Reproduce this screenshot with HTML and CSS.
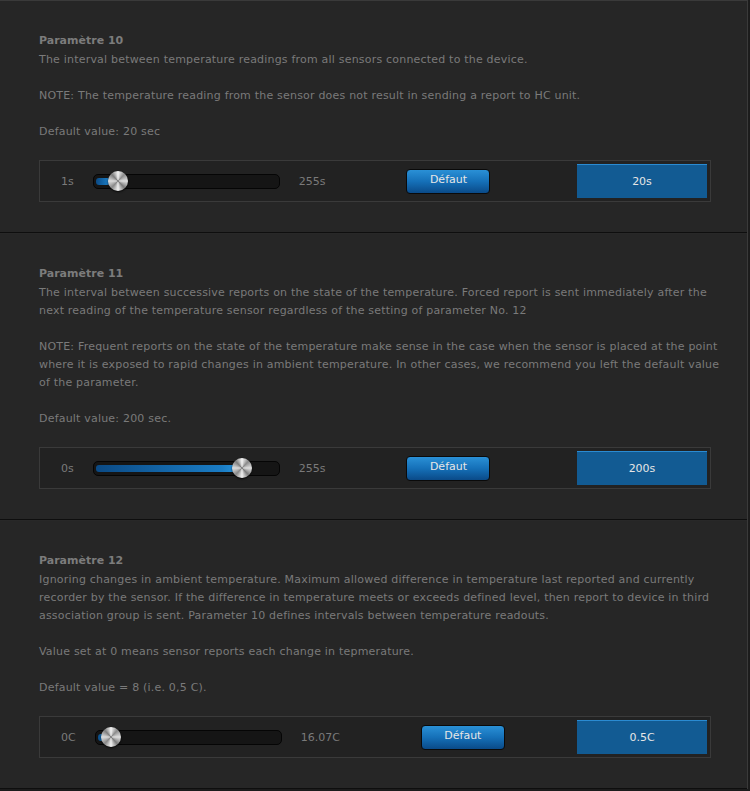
FILE: index.html
```html
<!DOCTYPE html>
<html lang="fr">
<head>
    <meta charset="UTF-8">
    <title>Paramètres</title>
    <link rel="stylesheet" href="styles.css">
</head>
<body>
    <div class="params">
        <section class="param">
            <h3>Paramètre 10</h3>
            <p>The interval between temperature readings from all sensors connected to the device.</p>
            <p>NOTE: The temperature reading from the sensor does not result in sending a report to HC unit.</p>
            <p>Default value: 20 sec</p>
            <div class="control">
                <span class="min">1s</span>
                <div class="slider">
                    <div class="fill" style="width: 14px"></div>
                    <div class="thumb" style="left: 14px"></div>
                </div>
                <span class="max">255s</span>
                <button class="btn-default">Défaut</button>
                <div class="value">20s</div>
            </div>
        </section>

        <section class="param">
            <h3>Paramètre 11</h3>
            <p>The interval between successive reports on the state of the temperature. Forced report is sent immediately after the next reading of the temperature sensor regardless of the setting of parameter No. 12</p>
            <p>NOTE: Frequent reports on the state of the temperature make sense in the case when the sensor is placed at the point where it is exposed to rapid changes in ambient temperature. In other cases, we recommend you left the default value of the parameter.</p>
            <p>Default value: 200 sec.</p>
            <div class="control">
                <span class="min">0s</span>
                <div class="slider">
                    <div class="fill" style="width: 140px"></div>
                    <div class="thumb" style="left: 138px"></div>
                </div>
                <span class="max">255s</span>
                <button class="btn-default">Défaut</button>
                <div class="value">200s</div>
            </div>
        </section>

        <section class="param">
            <h3>Paramètre 12</h3>
            <p>Ignoring changes in ambient temperature. Maximum allowed difference in temperature last reported and currently recorder by the sensor. If the difference in temperature meets or exceeds defined level, then report to device in third association group is sent. Parameter 10 defines intervals between temperature readouts.</p>
            <p>Value set at 0 means sensor reports each change in tepmerature.</p>
            <p>Default value = 8 (i.e. 0,5 C).</p>
            <div class="control">
                <span class="min">0C</span>
                <div class="slider">
                    <div class="fill" style="width: 6px"></div>
                    <div class="thumb" style="left: 5px"></div>
                </div>
                <span class="max">16.07C</span>
                <button class="btn-default">Défaut</button>
                <div class="value">0.5C</div>
            </div>
        </section>
    </div>
</body>
</html>
```

FILE: styles.css
```css
body {
    margin: 0;
    padding: 0;
    background-color: #1c1c1c;
    font-family: "DejaVu Sans", Verdana, sans-serif;
    font-size: 11px;
    color: #7a7a7a;
}
.params {
    width: 747px;
    background-color: #262626;
    border-top: 1px solid #3a3a3a;
    border-right: 1px solid #3a3a3a;
}
.param {
    padding: 31px 20px 30px 39px;
    border-bottom: 1px solid #0e0e0e;
}
.param + .param {
    border-top: 1px solid #282828;
}
.param h3 {
    margin: 0 0 1px 0;
    font-size: 11px;
    line-height: 18px;
    font-weight: bold;
    color: #7c7c7c;
}
.param p {
    margin: 0 0 18px 0;
    line-height: 18px;
    letter-spacing: 0.2px;
}
.param p:last-of-type {
    margin-bottom: 19px;
}
.control {
    display: flex;
    align-items: center;
    width: 646px;
    height: 40px;
    border: 1px solid #3a3a3a;
    background-color: #222;
    padding: 0 3px 0 21px;
}
.min {
    margin-right: 19px;
}
.max {
    margin-left: 19px;
    margin-right: 81px;
}
.slider {
    position: relative;
    width: 185px;
    height: 13px;
    background-color: #151515;
    border: 1px solid #050505;
    border-radius: 5px;
}
.fill {
    position: absolute;
    left: 2px;
    top: 3px;
    height: 7px;
    border-radius: 3px;
    background: linear-gradient(90deg, #0b4a85, #1a7cc4 90%, #2590d8);
}
.thumb {
    position: absolute;
    top: -4px;
    width: 20px;
    height: 20px;
    border-radius: 50%;
    background: conic-gradient(#f4f4f4, #8a8a8a 12%, #e0e0e0 25%, #7a7a7a 38%, #f0f0f0 50%, #888 62%, #dcdcdc 75%, #7c7c7c 88%, #f4f4f4);
    box-shadow: 0 1px 2px rgba(0,0,0,0.8);
}
.btn-default {
    width: 84px;
    height: 25px;
    padding: 0 0 3px 0;
    border: 1px solid #0a0a0a;
    border-radius: 4px;
    background: linear-gradient(#2a90d6, #1570b8 50%, #0a4a88);
    color: #e6e6e6;
    font-family: "DejaVu Sans", Verdana, sans-serif;
    font-size: 11px;
    cursor: pointer;
}
.value {
    margin-left: auto;
    width: 130px;
    height: 33px;
    line-height: 33px;
    text-align: center;
    background-color: #125b93;
    border-top: 1px solid #2a8bd2;
    color: #e6e6e6;
}
```
